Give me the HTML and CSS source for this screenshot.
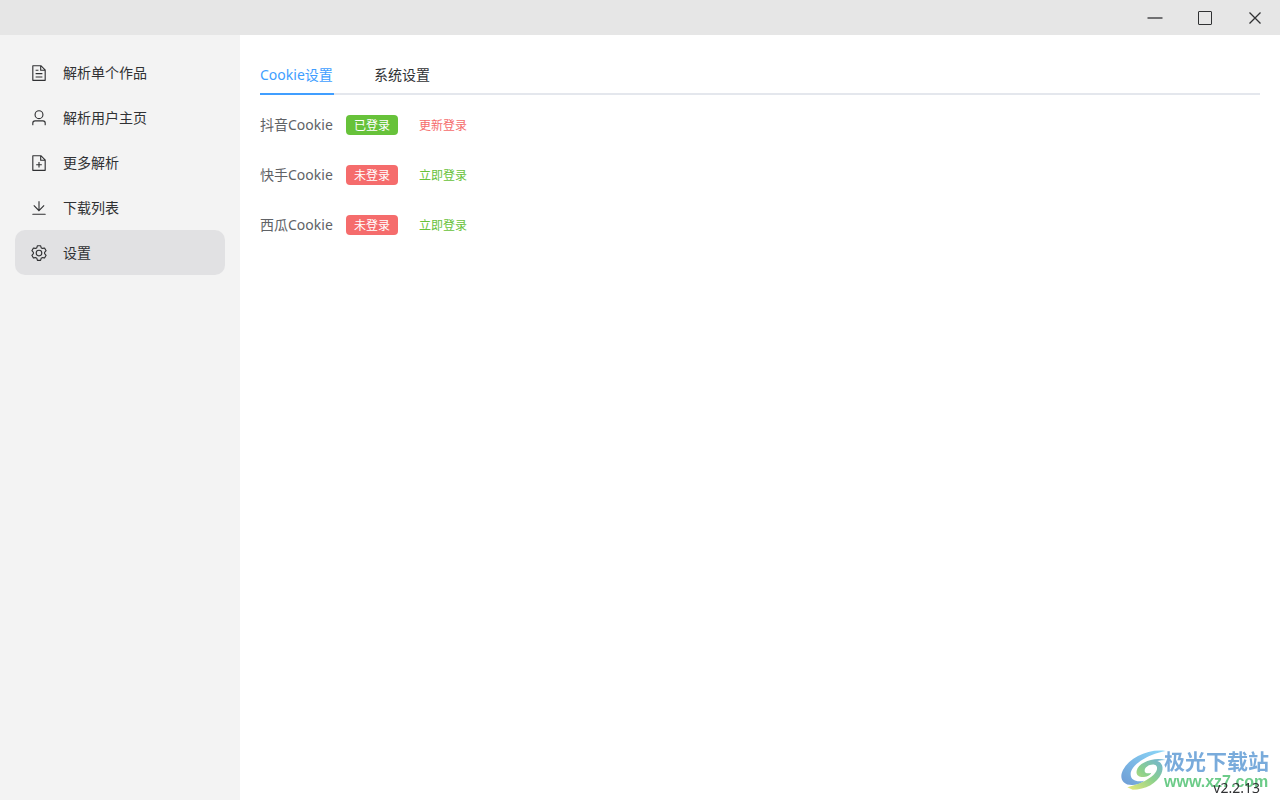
FILE: index.html
```html
<!DOCTYPE html>
<html lang="zh-CN">
<head>
<meta charset="utf-8">
<title>设置</title>
<link rel="stylesheet" href="styles.css">
</head>
<body>
<header class="titlebar">
  <button class="win-btn" aria-label="最小化"><svg viewBox="0 0 16 16"><path d="M.5 8h15" stroke-width="1.3"/></svg></button>
  <button class="win-btn" aria-label="最大化"><svg viewBox="0 0 16 16"><rect x="1.5" y="1.5" width="13" height="13" rx=".5"/></svg></button>
  <button class="win-btn" aria-label="关闭"><svg viewBox="0 0 16 16"><path d="m2.5 2.500 11 11m0-11-11 11" stroke-width="1.3"/></svg></button>
</header>
<div class="app">
  <nav class="sidebar">
    <a class="nav-item" href="#single"><svg viewBox="0 0 1024 1024"><path d="M832 384H576V128H192v768h640zm-26.496-64L640 154.496V320zM160 64h480l256 256v608a32 32 0 0 1-32 32H160a32 32 0 0 1-32-32V96a32 32 0 0 1 32-32m160 448h384v64H320zm0-192h160v64H320zm0 384h384v64H320z"/></svg><span>解析单个作品</span></a>
    <a class="nav-item" href="#user"><svg viewBox="0 0 1024 1024"><path d="M512 512a192 192 0 1 0 0-384 192 192 0 0 0 0 384m0 64a256 256 0 1 1 0-512 256 256 0 0 1 0 512m320 320v-96a96 96 0 0 0-96-96H288a96 96 0 0 0-96 96v96a32 32 0 1 1-64 0v-96a160 160 0 0 1 160-160h448a160 160 0 0 1 160 160v96a32 32 0 1 1-64 0"/></svg><span>解析用户主页</span></a>
    <a class="nav-item" href="#more"><svg viewBox="0 0 1024 1024"><path d="M832 384H576V128H192v768h640zm-26.496-64L640 154.496V320zM160 64h480l256 256v608a32 32 0 0 1-32 32H160a32 32 0 0 1-32-32V96a32 32 0 0 1 32-32m320 512V448h64v128h128v64H544v128h-64V640H352v-64z"/></svg><span>更多解析</span></a>
    <a class="nav-item" href="#downloads"><svg viewBox="0 0 1024 1024"><path d="M160 832h704a32 32 0 1 1 0 64H160a32 32 0 1 1 0-64m384-253.696 236.288-236.352 45.248 45.248L508.8 704 192 387.2l45.248-45.248L480 584.704V128h64z"/></svg><span>下载列表</span></a>
    <a class="nav-item active" href="#settings" aria-current="page"><svg viewBox="0 0 1024 1024"><path d="M600.704 64a32 32 0 0 1 30.464 22.208l35.2 109.376c14.784 7.232 28.928 15.36 42.432 24.512l112.384-24.192a32 32 0 0 1 34.432 15.36L944.32 364.8a32 32 0 0 1-4.032 37.504l-77.12 85.12a357.12 357.12 0 0 1 0 49.024l77.12 85.248a32 32 0 0 1 4.032 37.504l-88.704 153.6a32 32 0 0 1-34.432 15.296L708.8 803.904c-13.44 9.088-27.648 17.28-42.368 24.512l-35.264 109.376A32 32 0 0 1 600.704 960H423.296a32 32 0 0 1-30.464-22.208L357.696 828.48a351.616 351.616 0 0 1-42.56-24.64l-112.32 24.256a32 32 0 0 1-34.432-15.36L79.68 659.2a32 32 0 0 1 4.032-37.504l77.12-85.248a357.12 357.12 0 0 1 0-48.896l-77.12-85.248A32 32 0 0 1 79.68 364.8l88.704-153.6a32 32 0 0 1 34.432-15.296l112.32 24.256c13.568-9.152 27.776-17.408 42.56-24.64l35.2-109.312A32 32 0 0 1 423.232 64H600.64zm-23.424 64H446.72l-36.352 113.088-24.512 11.968a294.113 294.113 0 0 0-34.816 20.096l-22.656 15.36-116.224-25.088-65.28 113.152 79.68 88.192-1.92 27.136a293.12 293.12 0 0 0 0 40.192l1.92 27.136-79.808 88.192 65.344 113.152 116.224-25.024 22.656 15.296a294.113 294.113 0 0 0 34.816 20.096l24.512 11.968L446.72 896h130.688l36.48-113.152 24.448-11.904a288.282 288.282 0 0 0 34.752-20.096l22.592-15.296 116.288 25.024 65.28-113.152-79.744-88.192 1.92-27.136a293.12 293.12 0 0 0 0-40.256l-1.92-27.136 79.808-88.128-65.344-113.152-116.288 24.96-22.592-15.232a287.616 287.616 0 0 0-34.752-20.096l-24.448-11.904L577.344 128zM512 320a192 192 0 1 1 0 384 192 192 0 0 1 0-384m0 64a128 128 0 1 0 0 256 128 128 0 0 0 0-256"/></svg><span>设置</span></a>
  </nav>
  <main class="content">
    <div class="tabs" role="tablist">
      <button class="tab selected" role="tab" aria-selected="true">Cookie设置</button>
      <button class="tab" role="tab" aria-selected="false">系统设置</button>
    </div>
    <div class="accounts">
      <div class="account"><span class="name">抖音Cookie</span><span class="tag ok">已登录</span><button class="action refresh">更新登录</button></div>
      <div class="account"><span class="name">快手Cookie</span><span class="tag off">未登录</span><button class="action login">立即登录</button></div>
      <div class="account"><span class="name">西瓜Cookie</span><span class="tag off">未登录</span><button class="action login">立即登录</button></div>
    </div>
  </main>
</div>
<div class="brand">
  <svg class="brand-logo" viewBox="0 0 138 126">
    <defs>
      <linearGradient id="sky" x1="0" y1="1" x2="1" y2="0"><stop offset="0" stop-color="#5f92d0"/><stop offset="1" stop-color="#7fd4f8"/></linearGradient>
      <linearGradient id="leaf" x1="0" y1="1" x2="1" y2="0"><stop offset="0" stop-color="#e6e66a"/><stop offset=".5" stop-color="#7fcc80"/><stop offset="1" stop-color="#5fa8d8"/></linearGradient>
    </defs>
    <path fill="url(#sky)" d="M137 3C85-4 30 22 9 60c-13 25 0 46 28 45 14 0 27-5 36-13-20 5-41 1-41-19C32 47 78 14 137 3"/>
    <path fill="url(#leaf)" d="M137 30C100 20 56 38 50 62c-3 14 8 20 22 19 12-1 20-7 22-13-10 4-20 2-20-6 0-10 14-20 29-18 14 3 10 22-9 36-20 16-44 23-72 32l16 7c38 0 73-19 86-48 8-18 3-33-12-38 8-2 16-3 25-3"/>
  </svg>
  <div class="brand-text"><span class="brand-name">极光下载站</span><span class="brand-url">www.xz7.com</span></div>
</div>
<span class="version">v2.2.13</span>
</body>
</html>
```
FILE: styles.css
```css
* { box-sizing: border-box; }
body {
  margin: 0;
  min-height: 100vh;
  display: flex;
  flex-direction: column;
  background: #fff;
  color: #303133;
  font: 14px/20px "Noto Sans", "Noto Sans CJK SC", sans-serif;
}
button {
  padding: 0;
  border: 0;
  background: none;
  color: inherit;
  font: inherit;
  text-align: left;
  cursor: pointer;
}
.titlebar {
  display: flex;
  justify-content: flex-end;
  height: 35px;
  background: #e6e6e6;
}
.win-btn {
  width: 50px;
  display: flex;
  align-items: center;
  justify-content: center;
}
.win-btn svg { width: 16px; height: 16px; fill: none; stroke: #303133; }
.app { flex: 1; display: flex; }
.sidebar {
  width: 240px;
  flex: none;
  padding: 15px;
  background: #f3f3f3;
}
.nav-item {
  display: flex;
  align-items: center;
  gap: 15px;
  height: 45px;
  padding: 0 15px;
  border-radius: 10px;
  color: inherit;
  text-decoration: none;
}
.nav-item svg { width: 18px; height: 18px; fill: currentColor; }
.nav-item.active { background: #e1e1e3; }
.content { flex: 1; padding: 20px; }
.tabs {
  display: flex;
  gap: 40px;
  height: 40px;
  box-shadow: inset 0 -2px #e4e7ed;
}
.tab.selected {
  min-width: 74px;
  padding-top: 2px;
  border-bottom: 2px solid;
  color: #409eff;
}
.accounts { display: grid; gap: 10px; padding-top: 10px; }
.account { display: flex; align-items: center; height: 40px; color: #606266; }
.name { min-width: 74px; }
.tag {
  margin: 0 21px 0 12px;
  padding: 1px 8px 0;
  border-radius: 4px;
  color: #fff;
  font-size: 12px;
  line-height: 19px;
}
.tag.ok { background: #67c23a; }
.tag.off { background: #f56c6c; }
.action { padding-top: 2px; font-size: 12px; }
.refresh { color: #f56c6c; }
.login { color: #67c23a; }
.version { position: fixed; right: 20px; bottom: 2px; }
.brand {
  position: fixed;
  right: 11px;
  bottom: 8px;
  display: flex;
  align-items: center;
  opacity: .9;
  pointer-events: none;
}
.brand-logo { width: 46px; height: 42px; }
.brand-text {
  display: flex;
  flex-direction: column;
  margin-left: -2px;
  white-space: nowrap;
}
.brand-name { color: #6ba2d8; font-size: 21px; font-weight: 700; line-height: 22px; }
.brand-url { color: #5cc67c; font: 700 16px/20px "Liberation Sans", sans-serif; }
```
